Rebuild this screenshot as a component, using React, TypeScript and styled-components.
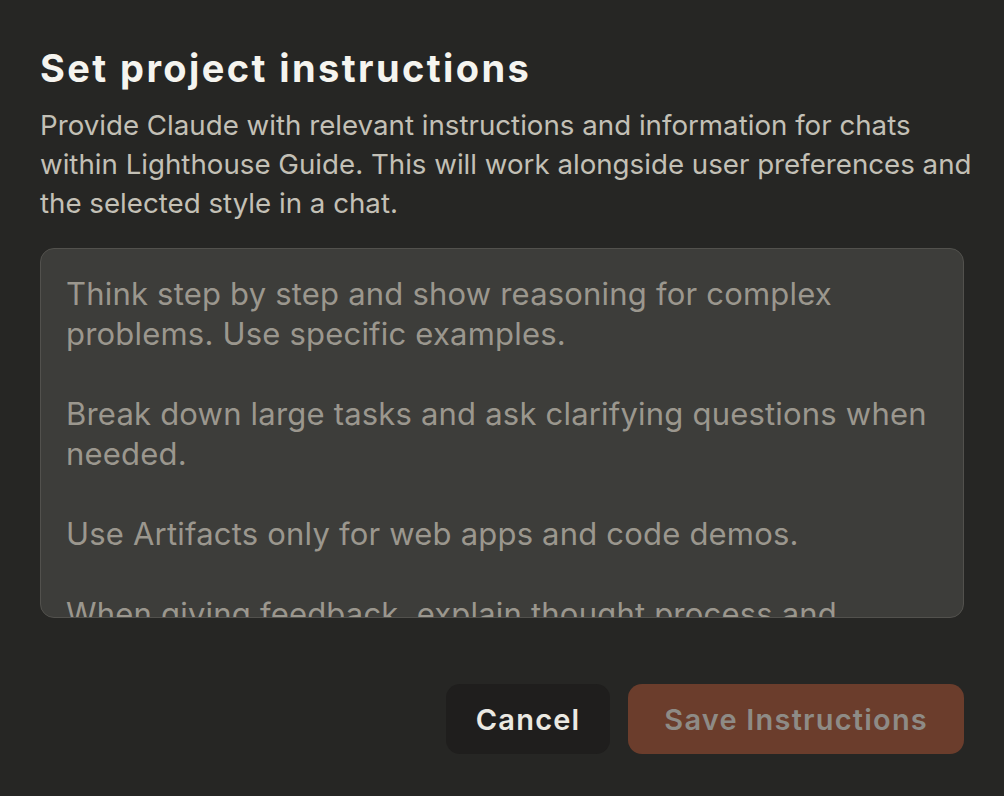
import styled, { createGlobalStyle } from "styled-components";

const GlobalStyle = createGlobalStyle`
  html, body {
    margin: 0;
    background: #262624;
  }
  body {
    font-family: "Inter", "Noto Sans", sans-serif;
    -webkit-font-smoothing: antialiased;
  }
`;

const lines = [
  "Think step by step and show reasoning for complex",
  "problems. Use specific examples.",
  "",
  "Break down large tasks and ask clarifying questions when",
  "needed.",
  "",
  "Use Artifacts only for web apps and code demos.",
  "",
  "When giving feedback, explain thought process and",
  "highlight issues and opportunities.",
];

function App() {
  return (
    <>
      <GlobalStyle />
      <Dialog>
        <Title>Set project instructions</Title>
        <Description>
          Provide Claude with relevant instructions and information for chats
          <br />
          within Lighthouse Guide. This will work alongside user preferences and
          <br />
          the selected style in a chat.
        </Description>
        <Field>
          {lines.map((line, i) => (
            <Line key={i}>{line || "\u00a0"}</Line>
          ))}
        </Field>
        <Actions>
          <Button>Cancel</Button>
          <Button $primary disabled>
            Save Instructions
          </Button>
        </Actions>
      </Dialog>
    </>
  );
}

export default App;

const Dialog = styled.div`
  width: 1004px;
  height: 796px;
  box-sizing: border-box;
  padding: 44px 40px 0;
  display: flex;
  flex-direction: column;
`;

const Title = styled.h1`
  margin: 0;
  font-size: 38px;
  line-height: 48px;
  font-weight: 700;
  color: #f5f4ef;
  letter-spacing: 2.4px;
`;

const Description = styled.p`
  margin: 14px 0 0;
  font-size: 27.7px;
  line-height: 39px;
  color: #c3c0b6;
  white-space: nowrap;
`;

const Field = styled.div`
  margin-top: 25px;
  height: 370px;
  flex-shrink: 0;
  box-sizing: border-box;
  padding: 25px 25px 0;
  background: #3d3d3a;
  border: 1.5px solid #52514d;
  border-radius: 14px;
  overflow: hidden;
`;

const Line = styled.div`
  font-size: 31px;
  line-height: 40px;
  letter-spacing: 0.2px;
  color: #9b978e;
  white-space: nowrap;
`;

const Actions = styled.div`
  margin-top: 66px;
  display: flex;
  justify-content: flex-end;
  gap: 18px;
`;

const Button = styled.button<{ $primary?: boolean }>`
  height: 70px;
  padding: ${(p) => (p.$primary ? "0 36px" : "0 30px")};
  border: none;
  border-radius: 14px;
  font-family: inherit;
  font-size: 29px;
  font-weight: 600;
  letter-spacing: 1.2px;
  background: ${(p) => (p.$primary ? "#6b3d2c" : "#1f1e1d")};
  color: ${(p) => (p.$primary ? "#8e8b86" : "#ebe9e2")};
  cursor: pointer;
  &:disabled {
    cursor: default;
  }
`;
